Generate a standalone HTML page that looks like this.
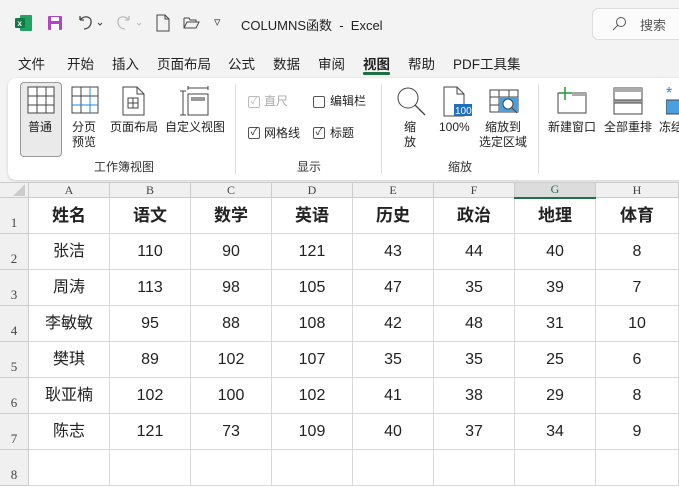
<!DOCTYPE html>
<html><head><meta charset="utf-8"><style>
*{margin:0;padding:0;box-sizing:border-box}
body{width:679px;height:487px;overflow:hidden;background:#f3f3f3;font-family:"Liberation Sans","Noto Sans CJK SC",sans-serif;position:relative;color:#222}
.a{position:absolute;white-space:nowrap}
.t{font-size:13px}
.tab{font-size:13.5px;top:53px}
.rb{position:absolute;left:8px;top:78px;width:680px;height:102px;background:#fff;border-radius:8px;box-shadow:0 1px 3px rgba(0,0,0,.15)}
.lbl{font-size:12px;color:#222;text-align:center;line-height:15px}
.grp{font-size:12px;color:#333}
.sep{position:absolute;top:84px;width:1px;height:90px;background:#ddd}
.cb{position:absolute;width:12px;height:12px;border:1px solid #555;border-radius:2px;font-size:10px;line-height:10px;text-align:center}
#grid{position:absolute;left:-1px;top:182px;width:681px;height:305px;background:#fff;overflow:hidden}
table{border-collapse:collapse;position:absolute;left:0;top:0;table-layout:fixed}
td{border:1px solid #d8d8d8;text-align:center;font-size:16px;height:36px;padding:0;line-height:20px}
td.h{background:#f0f0f0;font-family:"Liberation Serif",serif;font-size:12px;height:15px;line-height:13px;color:#444;border-color:#ccc}
td.r{background:#f0f0f0;font-family:"Liberation Serif",serif;font-size:13px;color:#444;vertical-align:bottom;padding-bottom:0;border-color:#ccc}
tr.hd td:not(.r){font-weight:bold;font-size:17px}
</style></head><body>
<svg class="a" style="left:15px;top:14px" width="18" height="18"><rect x="5" y="1" width="12" height="16" rx="1" fill="#21a366"/><rect x="0" y="4" width="10" height="10" rx="1" fill="#107c41"/><text x="2.5" y="12" font-size="8" fill="#fff" font-family="Liberation Sans" font-weight="bold">x</text></svg>
<svg class="a" style="left:47px;top:15px" width="16" height="16"><rect x="1" y="1" width="14" height="14" rx="1" fill="#b146c2"/><rect x="4" y="2" width="8" height="4" fill="#fff"/><rect x="4" y="9" width="8" height="6" fill="#fff"/></svg>
<svg class="a" style="left:76px;top:14px" width="30" height="18"><path d="M4 6 L4 2 M4 6 L8 6 M4 6 C8 1 16 2 15 9 C14 14 10 15 8 15" stroke="#444" fill="none" stroke-width="1.3"/><path d="M22 9l2 2 2-2" stroke="#444" fill="none"/></svg>
<svg class="a" style="left:115px;top:14px" width="30" height="18"><path d="M14 6 L14 2 M14 6 L10 6 M14 6 C10 1 2 2 3 9 C4 14 8 15 10 15" stroke="#bbb" fill="none" stroke-width="1.3"/><path d="M22 9l2 2 2-2" stroke="#bbb" fill="none"/></svg>
<svg class="a" style="left:156px;top:14px" width="14" height="18"><path d="M1 1h8l4 4v12H1z M9 1v4h4" stroke="#444" fill="none"/></svg>
<svg class="a" style="left:183px;top:16px" width="18" height="14"><path d="M1 2h5l1 2h6v2 M1 2v10h12l3-6H4l-3 6" stroke="#444" fill="none"/></svg>
<div class="a t" style="left:214px;top:14px;color:#444">&#9663;</div>
<div class="a t" style="left:241px;top:15px">COLUMNS函数&nbsp; - &nbsp;Excel</div>
<div class="a" style="left:592px;top:8px;width:100px;height:32px;border:1px solid #ddd;border-radius:6px;background:#fbfbfb"></div>
<svg class="a" style="left:612px;top:16px" width="16" height="16"><circle cx="9" cy="6" r="4.5" stroke="#555" fill="none"/><path d="M6 9l-5 5" stroke="#555"/></svg>
<div class="a t" style="left:640px;top:15px;color:#555">搜索</div>
<div class="a tab" style="left:18px">文件</div>
<div class="a tab" style="left:67px">开始</div>
<div class="a tab" style="left:112px">插入</div>
<div class="a tab" style="left:157px">页面布局</div>
<div class="a tab" style="left:228px">公式</div>
<div class="a tab" style="left:273px">数据</div>
<div class="a tab" style="left:318px">审阅</div>
<div class="a tab" style="left:363px;font-weight:bold">视图</div>
<div class="a" style="left:363px;top:72px;width:27px;height:3px;background:#1e7145;border-radius:1px"></div>
<div class="a tab" style="left:408px">帮助</div>
<div class="a tab" style="left:453px">PDF工具集</div>
<div class="rb"></div>
<div class="a" style="left:20px;top:82px;width:42px;height:75px;background:#eaeaea;border:1px solid #999;border-radius:4px"></div>
<svg class="a" style="left:27px;top:86px" width="28" height="28"><rect x="1" y="1" width="26" height="26" fill="#fff" stroke="#444"/><path d="M1 10h26M1 19h26M10 1v26M19 1v26" stroke="#444"/></svg>
<div class="a lbl" style="left:28px;top:120px">普通</div>
<svg class="a" style="left:71px;top:86px" width="28" height="28"><rect x="1" y="1" width="26" height="26" fill="#fff" stroke="#444"/><path d="M1 10h26M10 1v26" stroke="#444"/><path d="M1 19h26M19 1v26" stroke="#1e88e5"/></svg>
<div class="a lbl" style="left:72px;top:120px">分页<br>预览</div>
<svg class="a" style="left:122px;top:86px" width="24" height="30"><path d="M1 1h14l7 7v21H1z M15 1v7h7" stroke="#444" fill="#fff"/><rect x="6" y="12" width="10" height="10" stroke="#444" fill="none"/><path d="M6 17h10M11 12v10" stroke="#444"/></svg>
<div class="a lbl" style="left:110px;top:120px">页面布局</div>
<svg class="a" style="left:180px;top:86px" width="30" height="30"><path d="M8 2h20M8 0v4M28 0v4M3 5v24M0 5h6M0 29h6" stroke="#444"/><rect x="8" y="8" width="20" height="21" fill="#fff" stroke="#444"/><rect x="11" y="11" width="14" height="4" fill="#999"/></svg>
<div class="a lbl" style="left:165px;top:120px">自定义视图</div>
<div class="a grp" style="left:94px;top:158px">工作簿视图</div>
<div class="sep" style="left:235px"></div>
<div class="cb" style="left:248px;top:96px;border-color:#bbb;color:#bbb">✓</div><div class="a lbl" style="left:264px;top:94px;color:#aaa">直尺</div>
<div class="cb" style="left:313px;top:96px"></div><div class="a lbl" style="left:330px;top:94px">编辑栏</div>
<div class="cb" style="left:248px;top:127px">✓</div><div class="a lbl" style="left:264px;top:126px">网格线</div>
<div class="cb" style="left:313px;top:127px">✓</div><div class="a lbl" style="left:330px;top:126px">标题</div>
<div class="a grp" style="left:297px;top:158px">显示</div>
<div class="sep" style="left:381px"></div>
<svg class="a" style="left:395px;top:86px" width="32" height="32"><circle cx="13" cy="12" r="10" stroke="#444" fill="#fff"/><path d="M20 19l10 10" stroke="#444" stroke-width="1.3"/></svg>
<div class="a lbl" style="left:404px;top:120px">缩<br>放</div>
<svg class="a" style="left:443px;top:86px" width="30" height="32"><path d="M1 1h13l7 7v22H1z M14 1v7h7" stroke="#444" fill="#fff"/><rect x="11" y="18" width="18" height="12" fill="#1e6fc0"/><text x="12" y="28" font-size="10" fill="#fff" font-family="Liberation Sans">100</text></svg>
<div class="a lbl" style="left:439px;top:120px">100%</div>
<svg class="a" style="left:489px;top:89px" width="32" height="30"><rect x="1" y="1" width="28" height="22" fill="#fff" stroke="#444"/><path d="M1 8h28M1 16h28M10 1v22M20 1v22" stroke="#444"/><rect x="10" y="8" width="19" height="15" fill="#4a9fe0"/><circle cx="19" cy="15" r="5" stroke="#444" fill="#fff"/><path d="M23 19l5 5" stroke="#444"/></svg>
<div class="a lbl" style="left:479px;top:120px">缩放到<br>选定区域</div>
<div class="a grp" style="left:448px;top:158px">缩放</div>
<div class="sep" style="left:538px"></div>
<svg class="a" style="left:556px;top:86px" width="32" height="28"><rect x="2" y="7" width="28" height="20" fill="#fff" stroke="#444"/><rect x="16" y="7" width="14" height="3" fill="#aaa"/><path d="M9 1v13M3 7h13" stroke="#1e9c3a" stroke-width="1.5"/></svg>
<div class="a lbl" style="left:548px;top:120px">新建窗口</div>
<svg class="a" style="left:613px;top:87px" width="30" height="28"><rect x="1" y="1" width="28" height="26" fill="#fff" stroke="#444"/><rect x="1" y="1" width="28" height="4" fill="#aaa"/><rect x="1" y="13" width="28" height="3" fill="#aaa"/><path d="M1 13h28M1 16h28" stroke="#444"/></svg>
<div class="a lbl" style="left:604px;top:120px">全部重排</div>
<svg class="a" style="left:666px;top:86px" width="14" height="30"><text x="0" y="12" font-size="16" fill="#1e88e5">*</text><rect x="0" y="14" width="14" height="14" fill="#4a9fe0" stroke="#444"/></svg>
<div class="a lbl" style="left:659px;top:120px">冻结</div>
<div id="grid">
<table>
<colgroup><col style="width:29px"><col style="width:81px"><col style="width:81px"><col style="width:81px"><col style="width:81px"><col style="width:81px"><col style="width:81px"><col style="width:81px"><col style="width:83px"></colgroup>
<tr style="height:15px"><td class="h"><svg width="12" height="12" style="display:block;margin-left:13px"><path d="M12 0v12H0z" fill="#ccc"/></svg></td><td class="h">A</td><td class="h">B</td><td class="h">C</td><td class="h">D</td><td class="h">E</td><td class="h">F</td><td class="h" style="background:#dcdcdc;color:#1e7145;border-bottom:2px solid #1e7145">G</td><td class="h">H</td></tr>
<tr class="hd"><td class="r">1</td><td>姓名</td><td>语文</td><td>数学</td><td>英语</td><td>历史</td><td>政治</td><td>地理</td><td>体育</td></tr>
<tr><td class="r">2</td><td>张洁</td><td>110</td><td>90</td><td>121</td><td>43</td><td>44</td><td>40</td><td>8</td></tr>
<tr><td class="r">3</td><td>周涛</td><td>113</td><td>98</td><td>105</td><td>47</td><td>35</td><td>39</td><td>7</td></tr>
<tr><td class="r">4</td><td>李敏敏</td><td>95</td><td>88</td><td>108</td><td>42</td><td>48</td><td>31</td><td>10</td></tr>
<tr><td class="r">5</td><td>樊琪</td><td>89</td><td>102</td><td>107</td><td>35</td><td>35</td><td>25</td><td>6</td></tr>
<tr><td class="r">6</td><td>耿亚楠</td><td>102</td><td>100</td><td>102</td><td>41</td><td>38</td><td>29</td><td>8</td></tr>
<tr><td class="r">7</td><td>陈志</td><td>121</td><td>73</td><td>109</td><td>40</td><td>37</td><td>34</td><td>9</td></tr>
<tr><td class="r">8</td><td></td><td></td><td></td><td></td><td></td><td></td><td></td><td></td></tr>
</table>
</div>
</body></html>
